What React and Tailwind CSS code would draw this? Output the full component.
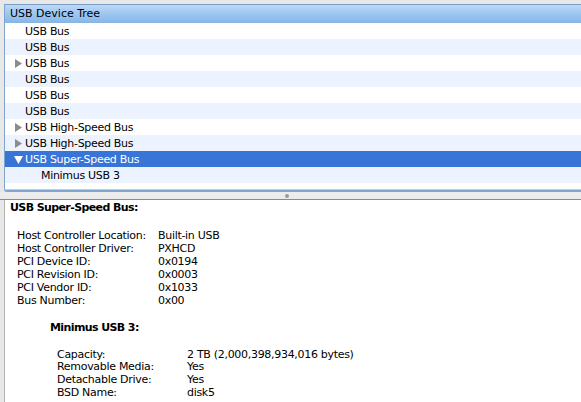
import React from 'react';

const font = { fontFamily: '"DejaVu Sans", "Liberation Sans", sans-serif' };

const treeRows = [
  { label: 'USB Bus', arrow: null },
  { label: 'USB Bus', arrow: null },
  { label: 'USB Bus', arrow: 'right' },
  { label: 'USB Bus', arrow: null },
  { label: 'USB Bus', arrow: null },
  { label: 'USB Bus', arrow: null },
  { label: 'USB High-Speed Bus', arrow: 'right' },
  { label: 'USB High-Speed Bus', arrow: 'right' },
  { label: 'USB Super-Speed Bus', arrow: 'down', selected: true },
  { label: 'Minimus USB 3', arrow: null, child: true },
];

const busInfo = [
  ['Host Controller Location:', 'Built-in USB'],
  ['Host Controller Driver:', 'PXHCD'],
  ['PCI Device ID:', '0x0194'],
  ['PCI Revision ID:', '0x0003'],
  ['PCI Vendor ID:', '0x1033'],
  ['Bus Number:', '0x00'],
];

const deviceInfo = [
  ['Capacity:', '2 TB (2,000,398,934,016 bytes)'],
  ['Removable Media:', 'Yes'],
  ['Detachable Drive:', 'Yes'],
  ['BSD Name:', 'disk5'],
];

function Arrow({ dir }) {
  if (dir === 'right') {
    return (
      <svg width="8" height="9" viewBox="0 0 8 9" className="absolute left-[10px] top-[4px]">
        <path d="M0 0 L7 4.5 L0 9 Z" fill="#8c8c8c" />
      </svg>
    );
  }
  return (
    <svg width="9" height="8" viewBox="0 0 9 8" className="absolute left-[9px] top-[5px]">
      <path d="M0 0 L9 0 L4.5 8 Z" fill="#ffffff" />
    </svg>
  );
}

function TreeRow({ row, index }) {
  const bg = row.selected ? 'bg-[#3875d7] text-white' : index % 2 === 1 ? 'bg-[#edf3fe] text-black' : 'bg-white text-black';
  return (
    <div className={`relative h-[16px] flex items-center ${bg}`}>
      {row.arrow && <Arrow dir={row.arrow} />}
      <span className={`${row.child ? 'pl-[36px]' : 'pl-[20px]'} tracking-[-0.3px] leading-none`}>{row.label}</span>
    </div>
  );
}

function InfoTable({ rows, keyWidth, indent }) {
  return (
    <div className={indent}>
      {rows.map(([k, v]) => (
        <div key={k} className="flex h-[12.9px] items-center">
          <span className={`${keyWidth} shrink-0 tracking-[-0.3px]`}>{k}</span>
          <span className="tracking-[-0.3px] whitespace-nowrap">{v}</span>
        </div>
      ))}
    </div>
  );
}

export default function App() {
  return (
    <div style={font} className="w-[581px] h-[402px] overflow-hidden bg-[#e8e8e8] pt-[4px] pl-[4px] flex flex-col text-[11px] text-black">
      {/* top pane: device tree */}
      <div className="h-[188px] shrink-0 bg-white border-l border-b-2 border-[#7fa6cf] rounded-bl-[3px] flex flex-col overflow-hidden">
        <div className="h-[19px] shrink-0 flex items-center pl-[5px] border-t border-b border-t-[#7c9dc6] border-b-[#8db4dd] bg-gradient-to-b from-[#bcd8f6] via-[#9fc7f1] to-[#86b8ec]">
          <span className="leading-none">USB Device Tree</span>
        </div>
        {treeRows.map((row, i) => (
          <TreeRow key={i} row={row} index={i} />
        ))}
        <div className="flex-1 bg-white border-b border-[#b9d1ea]" />
      </div>

      {/* splitter */}
      <div className="h-[8px] shrink-0 -ml-[4px] flex items-center justify-center border-b border-[#8a8a8a] bg-[#ececec]">
        <div className="w-[4px] h-[4px] rounded-full bg-[#9a9a9a] ml-[-8px]" />
      </div>

      {/* bottom pane: details */}
      <div className="flex-1 bg-white border-l border-[#b4b4b4] pl-[5px] overflow-hidden">
        <div className="h-[13px] mt-[2px] flex items-center font-bold tracking-[-0.6px]">USB Super-Speed Bus:</div>
        <div className="h-[15px]" />
        <InfoTable rows={busInfo} keyWidth="w-[141px]" indent="pl-[7px]" />
        <div className="h-[14px]" />
        <div className="h-[13px] flex items-center pl-[40px] font-bold tracking-[-0.6px]">Minimus USB 3:</div>
        <div className="h-[14px]" />
        <InfoTable rows={deviceInfo} keyWidth="w-[130px]" indent="pl-[47px]" />
      </div>
    </div>
  );
}
